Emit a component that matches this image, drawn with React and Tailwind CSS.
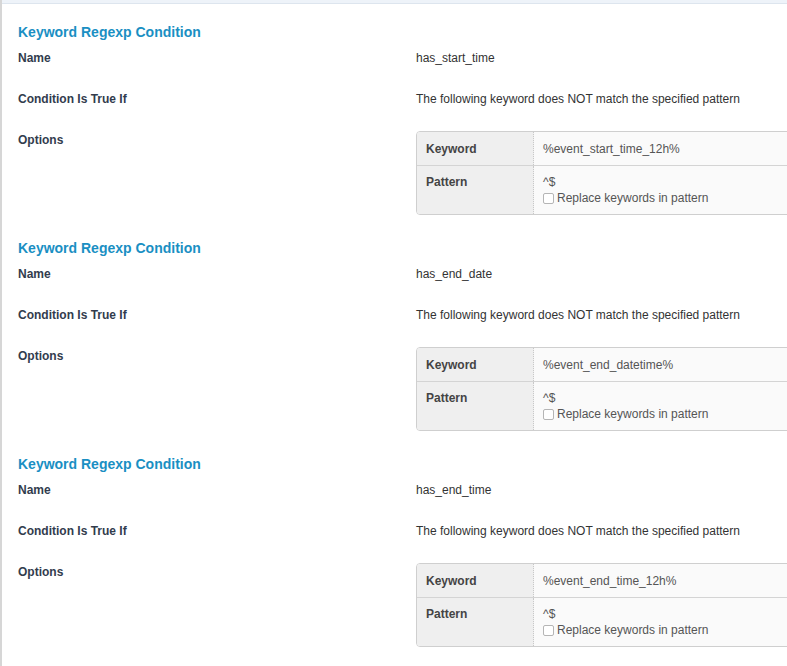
const sections = [
  { name: "has_start_time", keyword: "%event_start_time_12h%" },
  { name: "has_end_date", keyword: "%event_end_datetime%" },
  { name: "has_end_time", keyword: "%event_end_time_12h%" },
];

function OptionsTable({ keyword }) {
  return (
    <div className="w-[420px] overflow-hidden rounded-[4px] border border-[#cfcfcf] text-[12px]">
      <div className="flex h-[34px] border-b border-[#d4d4d4]">
        <div className="w-[117px] shrink-0 border-r border-dotted border-[#c8c8c8] bg-[#efefef] px-[9px] pt-[9px] font-bold leading-[16px] text-[#444]">
          Keyword
        </div>
        <div className="flex-1 bg-[#fafafa] px-[9px] pt-[9px] leading-[16px] text-[#555]">{keyword}</div>
      </div>
      <div className="flex h-[48px]">
        <div className="w-[117px] shrink-0 border-r border-dotted border-[#c8c8c8] bg-[#efefef] px-[9px] pt-[8px] font-bold leading-[16px] text-[#444]">
          Pattern
        </div>
        <div className="flex-1 bg-[#fafafa] px-[9px] pt-[8px] leading-[16px] text-[#555]">
          <div>^$</div>
          <label className="flex items-center gap-[3px]">
            <span className="inline-block h-[11px] w-[11px] rounded-[2px] border border-[#b5b5b5] bg-white" />
            <span>Replace keywords in pattern</span>
          </label>
        </div>
      </div>
    </div>
  );
}

function Row({ label, children, flush }) {
  return (
    <div className="flex">
      <div className="w-[398px] shrink-0 pt-[1px] text-[12px] font-bold leading-[16px] text-[#323c4d]">{label}</div>
      <div className={flush ? "flex-1" : "flex-1 pt-[1px] text-[12px] leading-[16px] text-[#333]"}>{children}</div>
    </div>
  );
}

function Condition({ name, keyword }) {
  return (
    <section className="mb-[24px]">
      <h3 className="mb-[8px] pt-[1px] text-[14px] font-bold leading-[17px] text-[#1a8fc3]">Keyword Regexp Condition</h3>
      <div className="flex flex-col gap-[24px]">
        <Row label="Name">{name}</Row>
        <Row label="Condition Is True If">The following keyword does NOT match the specified pattern</Row>
        <Row label="Options" flush>
          <OptionsTable keyword={keyword} />
        </Row>
      </div>
    </section>
  );
}

export default function App() {
  return (
    <div className="h-[666px] w-[787px] overflow-hidden bg-white font-['Liberation_Sans',Arial,sans-serif]">
      <div className="flex h-full border-l-2 border-[#d6d6d6]">
        <div className="flex-1 overflow-hidden">
          <div className="h-[4px] border-b border-[#dde5ee] bg-[#eef3f9]" />
          <div className="pl-[16px] pt-[19px]">
            {sections.map((s) => (
              <Condition key={s.name} {...s} />
            ))}
          </div>
        </div>
      </div>
    </div>
  );
}
